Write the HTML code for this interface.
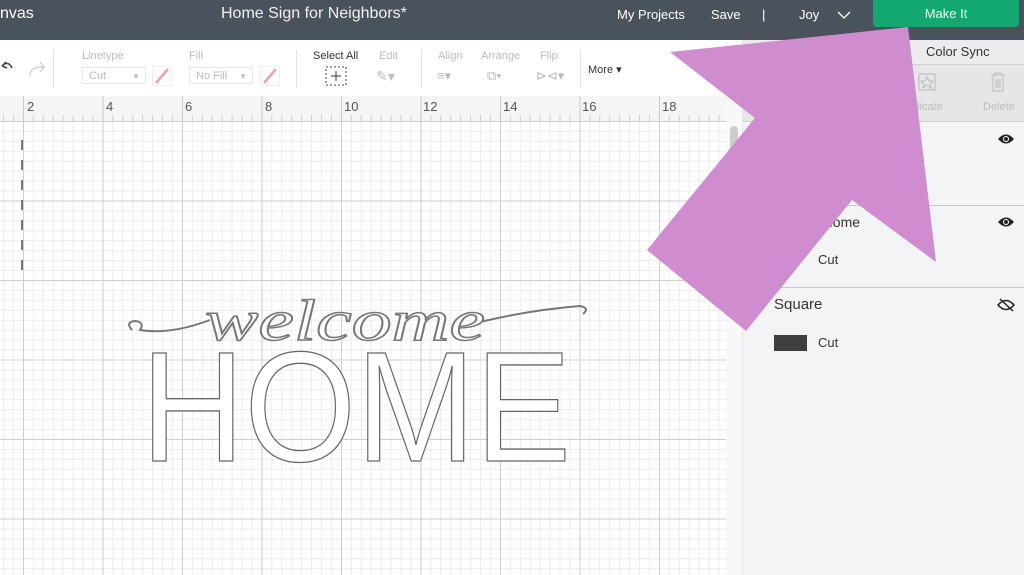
<!DOCTYPE html>
<html><head><meta charset="utf-8"><style>
body{margin:0;width:1024px;height:575px;overflow:hidden;position:relative;font-family:"Liberation Sans",sans-serif;background:#fff}
.top{position:absolute;left:0;top:0;width:1024px;height:40px;background:#4a535b;color:#fff}
.top span{position:absolute;top:6px;font-size:14px}
.tb{position:absolute;left:0;top:40px;width:742px;height:56px;background:#fff;border-bottom:1px solid #ddd}
.lbl{position:absolute;font-size:11px;color:#bbb}
.sel{position:absolute;font-size:11px;color:#333}
.vsep{position:absolute;top:50px;width:1px;height:38px;background:#e3e3e3}
.drop{position:absolute;top:67px;height:17px;border:1px solid #e6e6e6;font-size:11px;color:#bbb;line-height:17px;padding-left:6px;box-sizing:border-box}
.ruler{position:absolute;left:0;top:96px;width:726px;height:25px;background:#f5f5f5;border-bottom:1px solid #ddd}
.ruler span{position:absolute;top:3px;font-size:13px;color:#555}
.grid{position:absolute;left:0;top:121px;width:726px;height:454px;
background-image:linear-gradient(to right,#cfcfcf 1px,transparent 1px),linear-gradient(to bottom,#cfcfcf 1px,transparent 1px),linear-gradient(to right,#ececec 1px,transparent 1px),linear-gradient(to bottom,#ececec 1px,transparent 1px);
background-size:79.5px 79.5px,79.5px 79.5px,9.94px 9.94px,9.94px 9.94px;background-position:23px 0,0 79.5px,3px 0,0 0}
.panel{position:absolute;left:742px;top:40px;width:282px;height:535px;background:#f3f4f6;border-left:1px solid #e6e6e6}
.ph{position:absolute;left:0;top:0;width:282px;height:24px;background:#ececee;border-bottom:1px solid #d0d0d0}
.pt{position:absolute;left:0;top:25px;width:282px;height:56px;background:#e6e6e8;border-bottom:1px solid #cfcfcf}
.pline{position:absolute;left:0;width:282px;height:1px;background:#c9c9c9}
.pt2{position:absolute;font-size:14px;color:#333}
</style></head><body>
<div class="top">
<span style="left:0;font-size:16px;top:5px">nvas</span>
<span style="left:221px;font-size:16px;top:5px;color:#f0f0f0">Home Sign for Neighbors*</span>
<span style="left:617px;font-size:13px;top:7px">My Projects</span>
<span style="left:711px;font-size:13px;top:7px">Save</span>
<span style="left:762px;font-size:13px;top:7px">|</span>
<span style="left:799px;font-size:13px;top:7px">Joy</span>
<svg style="position:absolute;left:837px;top:10px" width="14" height="10"><path d="M1 2 L7 8 L13 2" stroke="#fff" fill="none" stroke-width="1.3"/></svg>
<div style="position:absolute;left:873px;top:0;width:146px;height:27px;background:#13a86f;border-radius:0 0 4px 4px;color:#e8fff4;font-size:13px;text-align:center;line-height:27px">Make It</div>
</div>
<div class="tb"></div>
<svg style="position:absolute;left:0;top:58px" width="50" height="22"><path d="M2 8 Q8 2 12 10 M2 8 L6 4 M2 8 L7 10" stroke="#444" fill="none" stroke-width="1.5"/><path d="M30 18 Q30 8 44 9 L40 4 M44 9 L40 14" stroke="#ccc" fill="none" stroke-width="1.3"/></svg>
<div class="vsep" style="left:53px"></div>
<div class="lbl" style="left:82px;top:50px">Linetype</div>
<div class="drop" style="left:82px;width:64px">Cut<span style="position:absolute;right:5px;font-size:8px">▼</span></div>
<svg style="position:absolute;left:152px;top:66px" width="20" height="20"><rect x="0.5" y="0.5" width="19" height="19" fill="#fff" stroke="#eee"/><path d="M4 17 L16 3" stroke="#f0a0a5" stroke-width="2.5"/></svg>
<div class="lbl" style="left:189px;top:50px">Fill</div>
<div class="drop" style="left:189px;width:64px">No Fill<span style="position:absolute;right:5px;font-size:8px">▼</span></div>
<svg style="position:absolute;left:260px;top:66px" width="20" height="20"><rect x="0.5" y="0.5" width="19" height="19" fill="#fff" stroke="#eee"/><path d="M4 17 L16 3" stroke="#f0a0a5" stroke-width="2.5"/></svg>
<div class="vsep" style="left:296px"></div>
<div class="sel" style="left:313px;top:50px">Select All</div>
<svg style="position:absolute;left:325px;top:66px" width="22" height="20"><rect x="1" y="1" width="20" height="18" fill="none" stroke="#444" stroke-dasharray="2 2"/><path d="M11 5 V15 M6 10 H16" stroke="#333"/></svg>
<div class="lbl" style="left:379px;top:50px">Edit</div>
<div class="lbl" style="left:376px;top:68px;font-size:14px">✎▾</div>
<div class="vsep" style="left:421px"></div>
<div class="lbl" style="left:438px;top:50px">Align</div>
<div class="lbl" style="left:437px;top:68px;font-size:13px">≡▾</div>
<div class="lbl" style="left:481px;top:50px">Arrange</div>
<div class="lbl" style="left:487px;top:68px;font-size:13px">⧉▾</div>
<div class="lbl" style="left:540px;top:50px">Flip</div>
<div class="lbl" style="left:536px;top:68px;font-size:13px">⊳⊲▾</div>
<div class="vsep" style="left:580px"></div>
<div class="sel" style="left:588px;top:63px">More ▾</div>
<div class="ruler">
<span style="left:27px">2</span><span style="left:106px">4</span><span style="left:185px">6</span><span style="left:265px">8</span><span style="left:344px">10</span><span style="left:423px">12</span><span style="left:503px">14</span><span style="left:582px">16</span><span style="left:662px">18</span>
<div style="position:absolute;left:0;top:19px;width:726px;height:6px;background-image:linear-gradient(to right,#ccc 1px,transparent 1px);background-size:9.94px 6px;background-position:3px 0"></div>
<div style="position:absolute;left:0;top:0;width:726px;height:25px;background-image:linear-gradient(to right,#ccc 1px,transparent 1px);background-size:79.5px 25px;background-position:23px 0"></div>
</div>
<div class="grid"></div>
<div style="position:absolute;left:726px;top:96px;width:16px;height:479px;background:#f8f8f8"></div>
<div style="position:absolute;left:730px;top:126px;width:8px;height:40px;background:#ccc;border-radius:4px"></div>
<div style="position:absolute;left:21px;top:140px;width:2px;height:135px;background-image:linear-gradient(to bottom,#777 10px,transparent 10px);background-size:2px 20px"></div>
<svg style="position:absolute;left:0;top:0" width="742" height="575">
<path d="M132 330 Q125 322 135 321 Q145 322 140 330 Q170 335 210 320 M480 322 Q530 310 580 306 Q590 308 583 314" stroke="#777" fill="none" stroke-width="2"/>
<text x="205" y="340" font-family="Liberation Serif" font-style="italic" font-size="58" fill="#fff" stroke="#777" stroke-width="1.5" textLength="280" lengthAdjust="spacingAndGlyphs">welcome</text>
<text x="141" y="461" font-family="Liberation Sans" font-size="157" fill="#fff" stroke="#666" stroke-width="1.3" textLength="430" lengthAdjust="spacingAndGlyphs">HOME</text>
</svg>
<div class="panel">
<div class="ph"><span style="position:absolute;left:183px;top:4px;font-size:13px;color:#333">Color Sync</span></div>
<div class="pt">
<svg style="position:absolute;left:173px;top:6px" width="22" height="22"><rect x="3" y="3" width="16" height="16" fill="none" stroke="#bbb"/><path d="M11 6 L13 10 L17 10 L14 13 L15 17 L11 14 L7 17 L8 13 L5 10 L9 10Z" fill="none" stroke="#bbb"/></svg>
<span style="position:absolute;left:168px;top:36px;font-size:11px;color:#bbb">plicate</span>
<svg style="position:absolute;left:246px;top:6px" width="18" height="22"><path d="M2 4 H16 M6 4 V2 H12 V4 M4 5 V20 H14 V5 M7 8 V17 M9 8 V17 M11 8 V17" fill="none" stroke="#bbb"/></svg>
<span style="position:absolute;left:240px;top:36px;font-size:11px;color:#bbb">Delete</span>
</div>
<div class="pline" style="top:165px"></div>
<div class="pline" style="top:247px"></div>
<svg style="position:absolute;left:254px;top:93px" width="18" height="12"><path d="M1 6 Q9 -3 17 6 Q9 15 1 6Z" fill="#222"/><circle cx="9" cy="6" r="3" fill="#fff"/><circle cx="9" cy="6" r="2" fill="#222"/></svg>
<svg style="position:absolute;left:254px;top:176px" width="18" height="12"><path d="M1 6 Q9 -3 17 6 Q9 15 1 6Z" fill="#222"/><circle cx="9" cy="6" r="3" fill="#fff"/><circle cx="9" cy="6" r="2" fill="#222"/></svg>
<span class="pt2" style="left:68px;top:174px">e Home</span>
<span class="pt2" style="left:75px;top:212px;font-size:13px">Cut</span>
<span class="pt2" style="left:31px;top:256px;font-size:15px">Square</span>
<svg style="position:absolute;left:254px;top:258px" width="18" height="14"><path d="M1 7 Q9 -2 17 7 Q9 16 1 7Z" fill="none" stroke="#222" stroke-width="1.5"/><path d="M3 1 L16 13" stroke="#222" stroke-width="1.5"/></svg>
<div style="position:absolute;left:31px;top:295px;width:33px;height:16px;background:#3e3e3e"></div>
<span class="pt2" style="left:75px;top:295px;font-size:13px">Cut</span>
</div>
<svg style="position:absolute;left:0;top:0" width="1024" height="575"><polygon points="670,52 908,27 936,262 852,200 746,331 647,250 755,118" fill="#cf8ccf"/></svg>
</body></html>
